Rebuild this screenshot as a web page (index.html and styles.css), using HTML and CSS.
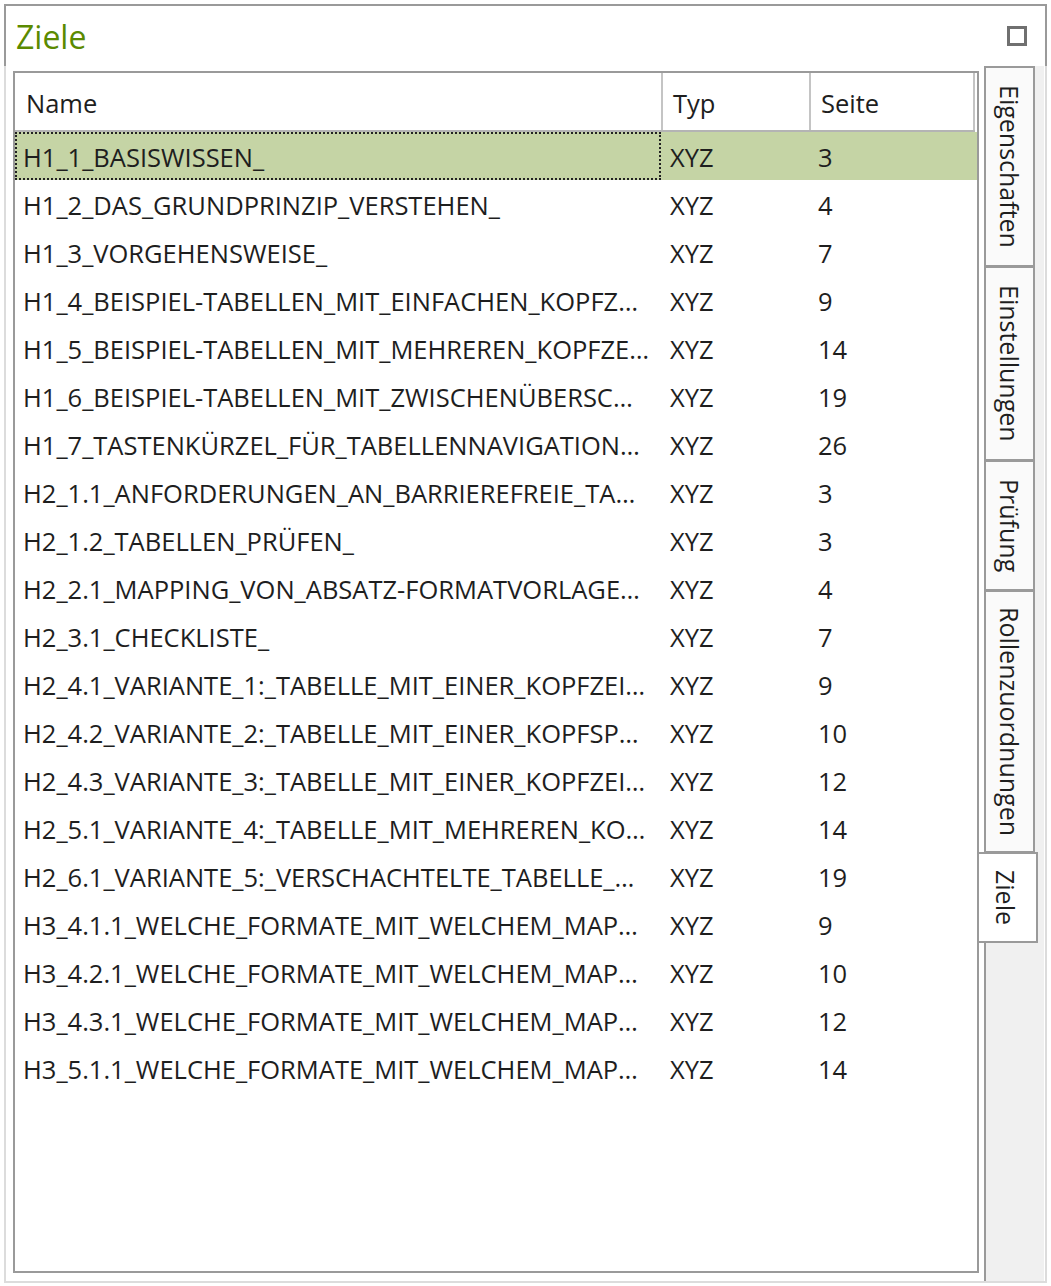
FILE: index.html
```html
<!DOCTYPE html>
<html>

<head>
    <title>Ziele</title>
    <link rel="stylesheet" href="styles.css">
</head>

<body>
    <div class="panel">
        <div class="titlebar">
            <h1>Ziele</h1>
            <div class="maximize"></div>
        </div>
        <div class="panel-body">
            <div class="liste">
                <div class="zeile kopf">
                    <div class="zelle">Name</div>
                    <div class="zelle">Typ</div>
                    <div class="zelle">Seite</div>
                </div>
                <div class="zeile aktiv">
                    <div class="zelle fokus">H1_1_BASISWISSEN_</div>
                    <div class="zelle">XYZ</div>
                    <div class="zelle">3</div>
                </div>
                <div class="zeile">
                    <div class="zelle">H1_2_DAS_GRUNDPRINZIP_VERSTEHEN_</div>
                    <div class="zelle">XYZ</div>
                    <div class="zelle">4</div>
                </div>
                <div class="zeile">
                    <div class="zelle">H1_3_VORGEHENSWEISE_</div>
                    <div class="zelle">XYZ</div>
                    <div class="zelle">7</div>
                </div>
                <div class="zeile">
                    <div class="zelle">H1_4_BEISPIEL-TABELLEN_MIT_EINFACHEN_KOPFZ…</div>
                    <div class="zelle">XYZ</div>
                    <div class="zelle">9</div>
                </div>
                <div class="zeile">
                    <div class="zelle">H1_5_BEISPIEL-TABELLEN_MIT_MEHREREN_KOPFZE…</div>
                    <div class="zelle">XYZ</div>
                    <div class="zelle">14</div>
                </div>
                <div class="zeile">
                    <div class="zelle">H1_6_BEISPIEL-TABELLEN_MIT_ZWISCHENÜBERSC…</div>
                    <div class="zelle">XYZ</div>
                    <div class="zelle">19</div>
                </div>
                <div class="zeile">
                    <div class="zelle">H1_7_TASTENKÜRZEL_FÜR_TABELLENNAVIGATION…</div>
                    <div class="zelle">XYZ</div>
                    <div class="zelle">26</div>
                </div>
                <div class="zeile">
                    <div class="zelle">H2_1.1_ANFORDERUNGEN_AN_BARRIEREFREIE_TA…</div>
                    <div class="zelle">XYZ</div>
                    <div class="zelle">3</div>
                </div>
                <div class="zeile">
                    <div class="zelle">H2_1.2_TABELLEN_PRÜFEN_</div>
                    <div class="zelle">XYZ</div>
                    <div class="zelle">3</div>
                </div>
                <div class="zeile">
                    <div class="zelle">H2_2.1_MAPPING_VON_ABSATZ-FORMATVORLAGE…</div>
                    <div class="zelle">XYZ</div>
                    <div class="zelle">4</div>
                </div>
                <div class="zeile">
                    <div class="zelle">H2_3.1_CHECKLISTE_</div>
                    <div class="zelle">XYZ</div>
                    <div class="zelle">7</div>
                </div>
                <div class="zeile">
                    <div class="zelle">H2_4.1_VARIANTE_1:_TABELLE_MIT_EINER_KOPFZEI…</div>
                    <div class="zelle">XYZ</div>
                    <div class="zelle">9</div>
                </div>
                <div class="zeile">
                    <div class="zelle">H2_4.2_VARIANTE_2:_TABELLE_MIT_EINER_KOPFSP…</div>
                    <div class="zelle">XYZ</div>
                    <div class="zelle">10</div>
                </div>
                <div class="zeile">
                    <div class="zelle">H2_4.3_VARIANTE_3:_TABELLE_MIT_EINER_KOPFZEI…</div>
                    <div class="zelle">XYZ</div>
                    <div class="zelle">12</div>
                </div>
                <div class="zeile">
                    <div class="zelle">H2_5.1_VARIANTE_4:_TABELLE_MIT_MEHREREN_KO…</div>
                    <div class="zelle">XYZ</div>
                    <div class="zelle">14</div>
                </div>
                <div class="zeile">
                    <div class="zelle">H2_6.1_VARIANTE_5:_VERSCHACHTELTE_TABELLE_…</div>
                    <div class="zelle">XYZ</div>
                    <div class="zelle">19</div>
                </div>
                <div class="zeile">
                    <div class="zelle">H3_4.1.1_WELCHE_FORMATE_MIT_WELCHEM_MAP…</div>
                    <div class="zelle">XYZ</div>
                    <div class="zelle">9</div>
                </div>
                <div class="zeile">
                    <div class="zelle">H3_4.2.1_WELCHE_FORMATE_MIT_WELCHEM_MAP…</div>
                    <div class="zelle">XYZ</div>
                    <div class="zelle">10</div>
                </div>
                <div class="zeile">
                    <div class="zelle">H3_4.3.1_WELCHE_FORMATE_MIT_WELCHEM_MAP…</div>
                    <div class="zelle">XYZ</div>
                    <div class="zelle">12</div>
                </div>
                <div class="zeile">
                    <div class="zelle">H3_5.1.1_WELCHE_FORMATE_MIT_WELCHEM_MAP…</div>
                    <div class="zelle">XYZ</div>
                    <div class="zelle">14</div>
                </div>
            </div>
            <div class="reiterleiste">
                <div class="reiter">Eigenschaften</div>
                <div class="reiter">Einstellungen</div>
                <div class="reiter">Prüfung</div>
                <div class="reiter">Rollenzuordnungen</div>
                <div class="reiter aktiv">Ziele</div>
                <div class="rest"></div>
            </div>
        </div>
    </div>
</body>

</html>
```

FILE: styles.css
```css
* {
    padding: 0;
    margin: 0;
    box-sizing: border-box;
}

body {
    background-color: white;
    font-family: "Open Sans", "Noto Sans", sans-serif;
    color: #1e1e1e;
}

.panel {
    margin: 4px 0 0 4px;
    width: 1043px;
    height: 1279px;
    border: 2px solid #dcdcdc;
    display: flex;
    flex-direction: column;
}

/* Kopfbereich mit dunklerem Rahmen */
.titlebar {
    margin: -2px -2px 0 -2px;
    height: 62px;
    border: 2px solid #9a9a9a;
    border-bottom: none;
    display: flex;
    align-items: center;
    justify-content: space-between;
    padding: 0 18px 0 10px;
}

h1 {
    font-weight: normal;
    font-size: 32px;
    color: #5b8a00;
}

.maximize {
    width: 20px;
    height: 20px;
    border: 3px solid #707070;
}

.panel-body {
    flex: 1;
    display: flex;
    min-height: 0;
}

.liste {
    margin: 5px 0 8px 7px;
    width: 966px;
    border: 2px solid #9a9a9a;
    font-size: 25.5px;
}

.zeile {
    display: grid;
    grid-template-columns: 646px 148px 1fr;
    height: 48px;
    align-items: center;
}

.zelle {
    white-space: nowrap;
    overflow: hidden;
    padding-left: 8px;
    padding-top: 1px;
    height: 100%;
    display: flex;
    align-items: center;
}

.zeile .zelle:nth-child(2) {
    padding-left: 9px;
}

.zeile .zelle:nth-child(3) {
    padding-left: 9px;
}

.kopf {
    height: 59px;
    border-bottom: 2px solid #b4b4b4;
    margin-right: 2px;
    grid-template-columns: 648px 148px 1fr;
}

.kopf .zelle {
    border-right: 2px solid #c4c4c4;
    padding-left: 11px;
    padding-top: 2px;
}

.kopf .zelle:nth-child(2) {
    padding-left: 10px;
}

.kopf .zelle:nth-child(3) {
    padding-left: 10px;
}

.aktiv .zelle {
    background-color: #c5d4a5;
}

.fokus {
    outline: 2px dotted #222;
    outline-offset: -2px;
}

/* Reiter rechts, senkrecht */
.reiterleiste {
    width: 65px;
    display: flex;
    flex-direction: column;
    padding-top: 1px;
    background: linear-gradient(to right, white 5px, #f0f0f0 5px);
}

.reiter {
    writing-mode: vertical-rl;
    margin-left: 5px;
    width: 51px;
    border: 2px solid #9a9a9a;
    margin-top: -1px;
    background-color: #fafafa;
    font-size: 25px;
    padding: 17px 0;
    display: flex;
    align-items: center;
    line-height: 47px;
}

.reiter:nth-child(4) {
    padding: 15px 0;
}

.reiter.aktiv {
    margin-left: 0;
    width: 59px;
    border-left: none;
    background-color: white;
    padding: 16px 0;
    padding-right: 4px;
}

.rest {
    flex: 1;
    margin-left: 5px;
    border-left: 2px solid #9a9a9a;
    margin-top: -1px;
}
```
